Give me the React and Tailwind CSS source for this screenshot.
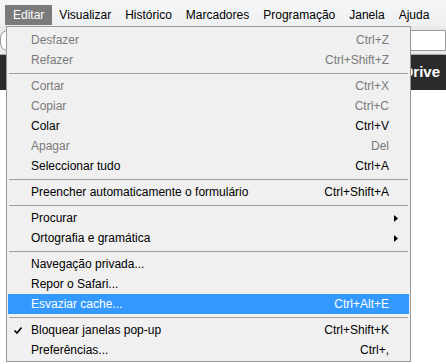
import React from "react";

const menuBar = ["Visualizar", "Histórico", "Marcadores", "Programação", "Janela", "Ajuda"];

const groups = [
  [
    { label: "Desfazer", shortcut: "Ctrl+Z", disabled: true },
    { label: "Refazer", shortcut: "Ctrl+Shift+Z", disabled: true },
  ],
  [
    { label: "Cortar", shortcut: "Ctrl+X", disabled: true },
    { label: "Copiar", shortcut: "Ctrl+C", disabled: true },
    { label: "Colar", shortcut: "Ctrl+V" },
    { label: "Apagar", shortcut: "Del", disabled: true },
    { label: "Seleccionar tudo", shortcut: "Ctrl+A" },
  ],
  [{ label: "Preencher automaticamente o formulário", shortcut: "Ctrl+Shift+A" }],
  [
    { label: "Procurar", submenu: true },
    { label: "Ortografia e gramática", submenu: true },
  ],
  [
    { label: "Navegação privada..." },
    { label: "Repor o Safari..." },
    { label: "Esvaziar cache...", shortcut: "Ctrl+Alt+E", active: true },
  ],
  [
    { label: "Bloquear janelas pop-up", shortcut: "Ctrl+Shift+K", checked: true },
    { label: "Preferências...", shortcut: "Ctrl+," },
  ],
];

const MenuItem = ({ item }) => {
  const color = item.active ? "text-white bg-[#3399ff]" : item.disabled ? "text-[#7a7a7a]" : "text-black";
  return (
    <div className={`relative flex h-[20px] items-center pl-[23px] pr-[20px] ${color}`}>
      {item.checked && (
        <svg className="absolute left-[6px] top-[7px]" width="8" height="7" viewBox="0 0 8 7">
          <path d="M0.5 3.5 L3 6 L7.5 0.5" fill="none" stroke="#000" strokeWidth="1.6" />
        </svg>
      )}
      <span className="flex-1">{item.label}</span>
      {item.shortcut && <span>{item.shortcut}</span>}
      {item.submenu && (
        <svg className="mr-[-9px]" width="4" height="7" viewBox="0 0 4 7">
          <path d="M0 0 L4 3.5 L0 7 Z" fill="#000" />
        </svg>
      )}
    </div>
  );
};

export default function App() {
  return (
    <div
      className="relative h-[364px] w-[446px] overflow-hidden bg-white text-[12px]"
      style={{ fontFamily: '"Liberation Sans", Arial, sans-serif' }}
    >
      <div className="flex h-[26px] items-start bg-gradient-to-b from-[#f5f6f7] to-[#eef0f2] pl-[5px] pt-[5px]">
        <div className="flex h-[20px] items-center bg-[#7a7a7a] px-[8px] text-white">Editar</div>
        {menuBar.map((m) => (
          <div key={m} className="flex h-[20px] items-center px-[7px] text-black">
            {m}
          </div>
        ))}
      </div>
      <div className="flex h-[29px] items-center border-b border-[#a8a8a8] bg-[#e8e9eb]">
        <div className="h-[21px] w-full rounded-l-[8px] border border-[#9a9a9a] bg-white" />
      </div>
      <div className="flex h-[35px] items-center justify-end bg-[#2b2b2b] pr-[6px] text-[15px] font-bold text-white">
        Drive
      </div>

      <div className="absolute left-[6px] top-[26px] w-[405px] border border-[#979797] bg-[#f0f0f0] px-[1px] pb-[1px] pt-[3px]">
        {groups.map((g, i) => (
          <div key={i}>
            {i > 0 && (
              <div className="flex h-[6px] items-center px-[1px]">
                <div className="h-[1px] w-full bg-[#a0a0a0]" />
              </div>
            )}
            {g.map((item) => (
              <MenuItem key={item.label} item={item} />
            ))}
          </div>
        ))}
      </div>
    </div>
  );
}
